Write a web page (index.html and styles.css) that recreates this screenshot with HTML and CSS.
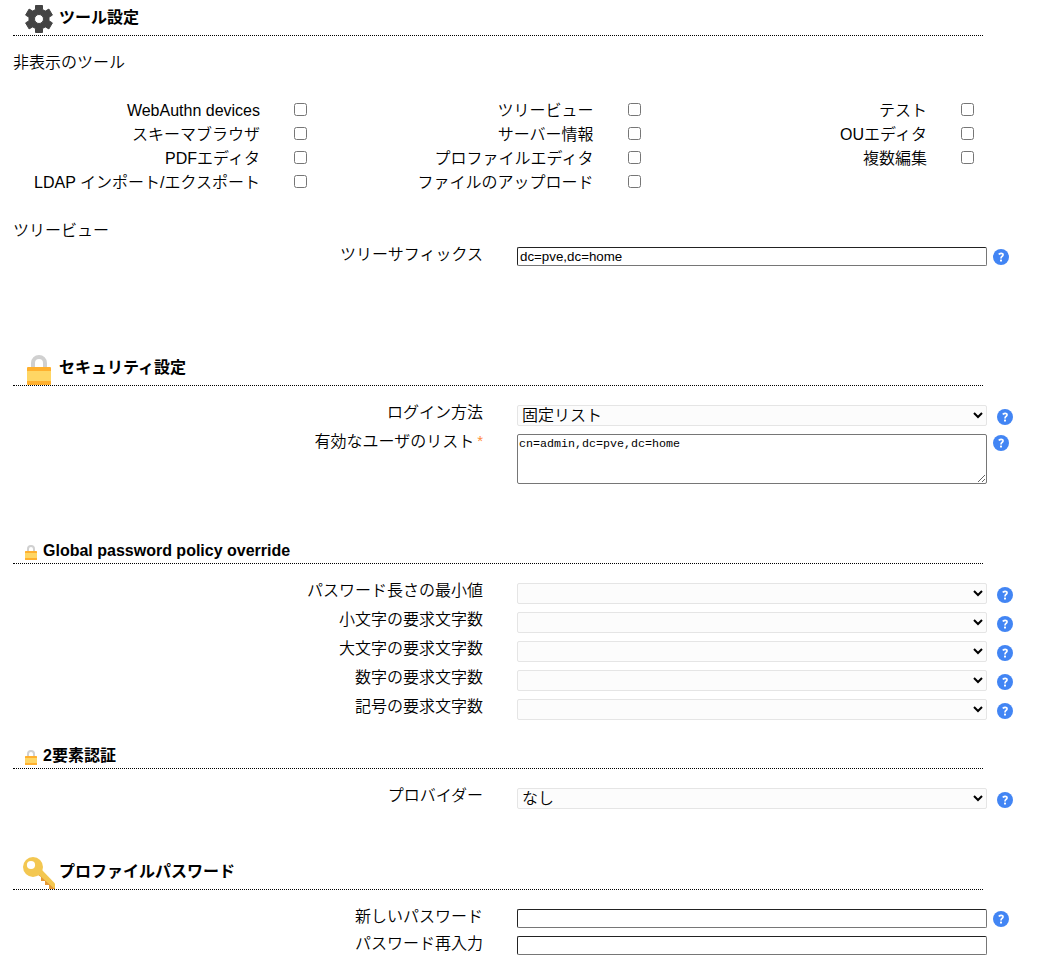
FILE: index.html
```html
<!DOCTYPE html>
<html lang="ja">
<head>
<meta charset="utf-8">
<title>ツール設定</title>
<link rel="stylesheet" href="styles.css">
</head>
<body>
<svg class="defs" aria-hidden="true">
  <symbol id="help" viewBox="0 0 16 16">
    <circle cx="8" cy="8" r="8" fill="#4285f4"/>
    <path d="M5.700 5.400Q8 3.700 9.500 4.700Q10.700 6 9.200 7.300Q8 8 8 9.500" fill="none" stroke="#fff" stroke-width="1.700"/>
    <rect x="7" y="10.500" width="2" height="2" rx=".6" fill="#fff"/>
  </symbol>
  <symbol id="lock" viewBox="0 0 32 32">
    <path d="M10 15V10a6 6 0 0 1 12 0V15" fill="none" stroke="#d0d0d0" stroke-width="4"/>
    <rect x="4" y="14" width="24" height="18" rx="1" fill="#ffb02e"/>
    <rect x="4" y="18" width="24" height="10" fill="#ffd664"/>
  </symbol>
</svg>
<main class="page">
  <section class="section tools">
    <h2 class="heading">
      <svg class="icon" viewBox="0 0 32 32"><path fill="#444" stroke="#444" stroke-linejoin="round" fill-rule="evenodd" d="M12.500 2.500h7v4l2.800 1.600 3.600-2 3.500 6-3.400 2.100v3.600l3.400 2.100-3.500 6-3.600-2-2.800 1.600v4h-7v-4l-2.800-1.600-3.600 2-3.500-6 3.400-2.100v-3.600l-3.400-2.100 3.500-6 3.600 2 2.800-1.600zM16 11.500a4.500 4.500 0 1 0 0 9 4.500 4.500 0 1 0 0-9z"/></svg>
      <span>ツール設定</span>
    </h2>
    <p class="caption hidden-caption">非表示のツール</p>
    <div class="tool-grid">
      <label class="tool"><span>WebAuthn devices</span><input type="checkbox"></label>
      <label class="tool"><span>ツリービュー</span><input type="checkbox"></label>
      <label class="tool"><span>テスト</span><input type="checkbox"></label>
      <label class="tool"><span>スキーマブラウザ</span><input type="checkbox"></label>
      <label class="tool"><span>サーバー情報</span><input type="checkbox"></label>
      <label class="tool"><span>OUエディタ</span><input type="checkbox"></label>
      <label class="tool"><span>PDFエディタ</span><input type="checkbox"></label>
      <label class="tool"><span>プロファイルエディタ</span><input type="checkbox"></label>
      <label class="tool"><span>複数編集</span><input type="checkbox"></label>
      <label class="tool"><span>LDAP インポート/エクスポート</span><input type="checkbox"></label>
      <label class="tool"><span>ファイルのアップロード</span><input type="checkbox"></label>
    </div>
    <p class="caption tree-caption">ツリービュー</p>
    <div class="field"><label>ツリーサフィックス</label><input class="text" type="text" value="dc=pve,dc=home"><svg class="help"><use href="#help"/></svg></div>
  </section>

  <section class="section security">
    <h2 class="heading"><svg class="icon"><use href="#lock"/></svg><span>セキュリティ設定</span></h2>
    <div class="fields">
      <div class="field select-field"><label>ログイン方法</label><select class="select"><option>固定リスト</option></select><svg class="help"><use href="#help"/></svg></div>
      <div class="field area-field"><label>有効なユーザのリスト<span class="required">*</span></label><textarea class="area">cn=admin,dc=pve,dc=home</textarea><svg class="help"><use href="#help"/></svg></div>
    </div>
  </section>

  <section class="section policy">
    <h3 class="heading small"><svg class="icon"><use href="#lock"/></svg><span>Global password policy override</span></h3>
    <div class="fields">
      <div class="field select-field"><label>パスワード長さの最小値</label><select class="select"></select><svg class="help"><use href="#help"/></svg></div>
      <div class="field select-field"><label>小文字の要求文字数</label><select class="select"></select><svg class="help"><use href="#help"/></svg></div>
      <div class="field select-field"><label>大文字の要求文字数</label><select class="select"></select><svg class="help"><use href="#help"/></svg></div>
      <div class="field select-field"><label>数字の要求文字数</label><select class="select"></select><svg class="help"><use href="#help"/></svg></div>
      <div class="field select-field"><label>記号の要求文字数</label><select class="select"></select><svg class="help"><use href="#help"/></svg></div>
    </div>
  </section>

  <section class="section two-factor">
    <h3 class="heading small"><svg class="icon"><use href="#lock"/></svg><span>2要素認証</span></h3>
    <div class="fields">
      <div class="field select-field"><label>プロバイダー</label><select class="select"><option>なし</option></select><svg class="help"><use href="#help"/></svg></div>
    </div>
  </section>

  <section class="section profile">
    <h2 class="heading">
      <svg class="icon" viewBox="0 0 32 32">
        <path d="M15 18l3-2 14 13v3h-6v-4h-4v-4h-4v-4z" fill="#e59836"/>
        <path d="M15 17l4-4 13 13.500V31h-1.500z" fill="#f3c751"/>
        <circle cx="10" cy="10" r="10" fill="#f3c751"/>
        <circle cx="8" cy="8" r="4.100" fill="#fff"/>
      </svg>
      <span>プロファイルパスワード</span>
    </h2>
    <div class="fields">
      <div class="field"><label>新しいパスワード</label><input class="text" type="password"><svg class="help"><use href="#help"/></svg></div>
      <div class="field"><label>パスワード再入力</label><input class="text" type="password"></div>
    </div>
  </section>
</main>
</body>
</html>
```
FILE: styles.css
```css
* { box-sizing: border-box; }

body {
  margin: 0;
  background: #fff;
  color: #000;
  font: 350 16px/24px "Liberation Sans", "Noto Sans CJK JP", sans-serif;
}

.defs { display: none; }

.page {
  height: 963px;
  padding-left: 13px;
  overflow: hidden;
}

.section { display: flow-root; }
.tools { height: 350px; }
.security { height: 188px; }
.policy { height: 205px; }
.two-factor { height: 111px; }

.heading {
  display: flex;
  gap: 4px;
  width: 970px;
  height: 36px;
  margin: 0;
  padding: 3px 0 0 10px;
  border-bottom: 1px dotted #000;
  font-size: 16px;
  font-weight: 700;
}

.heading span { margin-top: 3px; }
.icon { flex: none; width: 32px; height: 32px; }

.heading.small {
  height: 26px;
  padding-top: 0;
}

.small .icon { width: 16px; height: 16px; margin-top: 6px; }
.small span { margin-top: 1px; }

.caption { margin: 0; }
.hidden-caption { padding-top: 15px; }

.tool-grid {
  display: grid;
  grid-template-columns: repeat(3, 333.5px);
  margin-top: 24px;
}

.tool {
  display: flex;
  gap: 34px;
}

.tool span { width: 247px; text-align: right; white-space: nowrap; }
.tool input { width: 13px; height: 13px; margin: 4px 0 0; }
.tree-caption { height: 23px; margin-top: 24px; }

.fields { padding-top: 14px; }

.field {
  display: grid;
  grid-template-columns: 470px 470px 16px;
  column-gap: 34px;
  align-items: start;
  height: 27px;
}

.field label { padding-top: 1px; text-align: right; }
.text, .select, .area { width: 470px; margin: 5px 0 0; }

.text {
  height: 19px;
  padding: 1px 1px 1px 2px;
  border: 1px solid #767676;
  border-top-color: #222;
  border-left-color: #222;
  border-radius: 2px;
  font: 13.333px "Liberation Sans", sans-serif;
}

.help { width: 16px; height: 16px; margin: 7px 0 0 -28px; }

.select-field { height: 29px; }
.select-field .help { margin: 9px 0 0 -24px; }

.select {
  height: 21px;
  padding: 0;
  border: 1px solid #e5e5e5;
  border-radius: 2px;
  background-color: #fcfcfc;
  color: #000;
  font: inherit;
  line-height: 19px;
}

.area-field { height: 55px; }
.area-field .help { margin-top: 6px; }

.area {
  height: 50px;
  padding: 2px 1px;
  border: 1px solid #767676;
  border-radius: 2px;
  color: #000;
  font: 11.667px/14px "Liberation Mono", monospace;
  resize: both;
}

.required {
  margin-left: 3px;
  color: #ff8c3c;
  font-size: 15px;
  vertical-align: 1px;
  line-height: 1;
}
```
